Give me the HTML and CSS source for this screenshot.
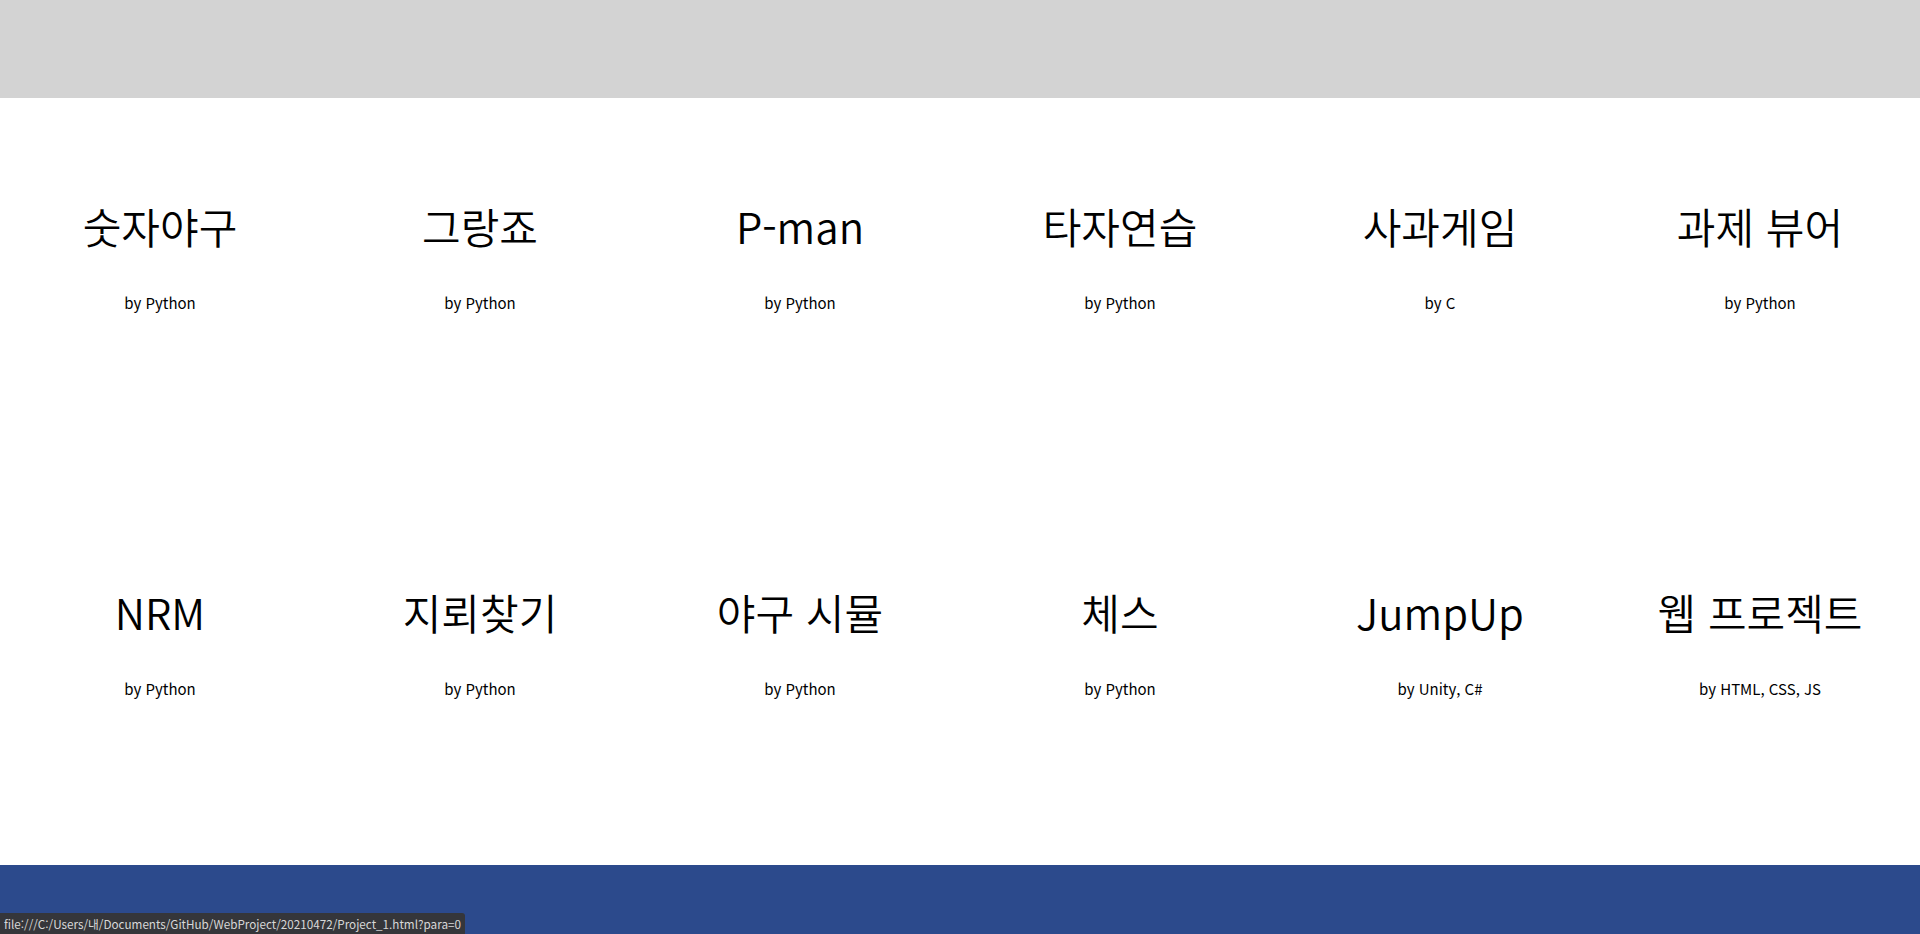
FILE: index.html
```html
<!DOCTYPE html>
<html lang="ko">
<head>
<meta charset="utf-8">
<title>Projects</title>
<link rel="stylesheet" href="styles.css">
</head>
<body>
<header class="top"></header>
<main class="projects">
  <a class="card" href="#"><span class="title">숫자야구</span><span class="by">by Python</span></a>
  <a class="card" href="#"><span class="title">그랑죠</span><span class="by">by Python</span></a>
  <a class="card" href="#"><span class="title">P-man</span><span class="by">by Python</span></a>
  <a class="card" href="#"><span class="title">타자연습</span><span class="by">by Python</span></a>
  <a class="card" href="#"><span class="title">사과게임</span><span class="by">by C</span></a>
  <a class="card" href="#"><span class="title">과제 뷰어</span><span class="by">by Python</span></a>
  <a class="card" href="#"><span class="title">NRM</span><span class="by">by Python</span></a>
  <a class="card" href="#"><span class="title">지뢰찾기</span><span class="by">by Python</span></a>
  <a class="card" href="#"><span class="title">야구 시뮬</span><span class="by">by Python</span></a>
  <a class="card" href="#"><span class="title">체스</span><span class="by">by Python</span></a>
  <a class="card" href="#"><span class="title">JumpUp</span><span class="by">by Unity, C#</span></a>
  <a class="card" href="#"><span class="title">웹 프로젝트</span><span class="by">by HTML, CSS, JS</span></a>
</main>
<footer class="bottom"></footer>
<div class="status">file:///C:/Users/내/Documents/GitHub/WebProject/20210472/Project_1.html?para=0</div>
</body>
</html>
```
FILE: styles.css
```css
html, body {
  margin: 0;
  padding: 0;
}
body {
  font-family: "Noto Sans CJK KR", "Noto Sans", sans-serif;
  color: #000;
  background: #fff;
  height: 934px;
  overflow: hidden;
  display: flex;
  flex-direction: column;
}
.top {
  height: 98px;
  background: #d3d3d3;
  flex: none;
}
.projects {
  flex: none;
  height: 767px;
  box-sizing: border-box;
  padding-top: 104px;
  display: grid;
  grid-template-columns: repeat(6, 1fr);
  grid-auto-rows: 110px;
  row-gap: 276px;
}
.card {
  display: flex;
  flex-direction: column;
  align-items: center;
  text-decoration: none;
  color: #000;
}
.title {
  font-size: 42px;
  font-weight: 350;
  line-height: 48px;
  height: 48px;
  white-space: nowrap;
}
.by {
  margin-top: 43px;
  font-size: 15px;
  line-height: 20px;
}
.bottom {
  flex: 1;
  background: #2c4a8c;
}
.status {
  position: fixed;
  left: 0;
  bottom: 0;
  height: 21px;
  line-height: 21px;
  padding: 0 4px 0 4px;
  background: #35363a;
  color: #d8d8d8;
  font-size: 11.7px;
  border-top-right-radius: 3px;
  white-space: nowrap;
}
```
